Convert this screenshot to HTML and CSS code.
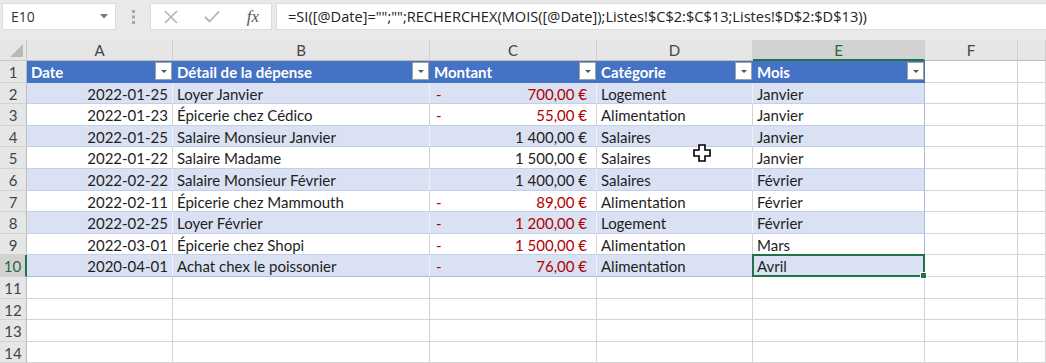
FILE: index.html
```html
<!DOCTYPE html>
<html lang="fr">
<head>
  <meta charset="UTF-8">
  <title>Dépenses</title>
  <link rel="stylesheet" href="styles.css">
</head>
<body>
<div class="toolbar">
  <div class="namebox">
    <span>E10</span>
    <svg width="8" height="5" viewBox="0 0 8 5"><path d="M0 0h8L4 4.5z" fill="#777"/></svg>
  </div>
  <div class="grip">
    <svg width="3" height="14" viewBox="0 0 3 14"><rect x="0" y="0" width="3" height="3" fill="#a6a6a6"/><rect x="0" y="5.5" width="3" height="3" fill="#a6a6a6"/><rect x="0" y="11" width="3" height="3" fill="#a6a6a6"/></svg>
  </div>
  <div class="fxbox">
    <svg width="14" height="14" viewBox="0 0 14 14"><path d="M1 1L13 13M13 1L1 13" stroke="#b3b3b3" stroke-width="1.6"/></svg>
    <svg width="16" height="13" viewBox="0 0 16 13"><path d="M1 7l4.5 4.5L15 1.5" fill="none" stroke="#b3b3b3" stroke-width="1.8"/></svg>
    <span class="fx">fx</span>
  </div>
  <div class="formula">=SI([@Date]="";"";RECHERCHEX(MOIS([@Date]);Listes!$C$2:$C$13;Listes!$D$2:$D$13))</div>
</div>

<div class="sheet">
  <div class="corner"></div>
  <div class="colh">A</div>
  <div class="colh">B</div>
  <div class="colh">C</div>
  <div class="colh">D</div>
  <div class="colh on">E</div>
  <div class="colh">F</div>
  <div class="colh"></div>

  <div class="rh">1</div>
  <div class="hd">Date<span class="dd"></span></div>
  <div class="hd">Détail de la dépense<span class="dd"></span></div>
  <div class="hd">Montant<span class="dd"></span></div>
  <div class="hd">Catégorie<span class="dd"></span></div>
  <div class="hd">Mois<span class="dd"></span></div>
  <div class="c"></div>
  <div class="c"></div>

  <div class="row band">
    <div class="rh">2</div>
    <div class="c t num">2022-01-25</div>
    <div class="c t">Loyer Janvier</div>
    <div class="c t money neg"><span>-</span><span>700,00 €</span></div>
    <div class="c t">Logement</div>
    <div class="c t last">Janvier</div>
    <div class="c"></div>
    <div class="c"></div>
  </div>
  <div class="row">
    <div class="rh">3</div>
    <div class="c t num">2022-01-23</div>
    <div class="c t">Épicerie chez Cédico</div>
    <div class="c t money neg"><span>-</span><span>55,00 €</span></div>
    <div class="c t">Alimentation</div>
    <div class="c t last">Janvier</div>
    <div class="c"></div>
    <div class="c"></div>
  </div>
  <div class="row band">
    <div class="rh">4</div>
    <div class="c t num">2022-01-25</div>
    <div class="c t">Salaire Monsieur Janvier</div>
    <div class="c t money"><span></span><span>1 400,00 €</span></div>
    <div class="c t">Salaires</div>
    <div class="c t last">Janvier</div>
    <div class="c"></div>
    <div class="c"></div>
  </div>
  <div class="row">
    <div class="rh">5</div>
    <div class="c t num">2022-01-22</div>
    <div class="c t">Salaire Madame</div>
    <div class="c t money"><span></span><span>1 500,00 €</span></div>
    <div class="c t">Salaires</div>
    <div class="c t last">Janvier</div>
    <div class="c"></div>
    <div class="c"></div>
  </div>
  <div class="row band">
    <div class="rh">6</div>
    <div class="c t num">2022-02-22</div>
    <div class="c t">Salaire Monsieur Février</div>
    <div class="c t money"><span></span><span>1 400,00 €</span></div>
    <div class="c t">Salaires</div>
    <div class="c t last">Février</div>
    <div class="c"></div>
    <div class="c"></div>
  </div>
  <div class="row">
    <div class="rh">7</div>
    <div class="c t num">2022-02-11</div>
    <div class="c t">Épicerie chez Mammouth</div>
    <div class="c t money neg"><span>-</span><span>89,00 €</span></div>
    <div class="c t">Alimentation</div>
    <div class="c t last">Février</div>
    <div class="c"></div>
    <div class="c"></div>
  </div>
  <div class="row band">
    <div class="rh">8</div>
    <div class="c t num">2022-02-25</div>
    <div class="c t">Loyer Février</div>
    <div class="c t money neg"><span>-</span><span>1 200,00 €</span></div>
    <div class="c t">Logement</div>
    <div class="c t last">Février</div>
    <div class="c"></div>
    <div class="c"></div>
  </div>
  <div class="row">
    <div class="rh">9</div>
    <div class="c t num">2022-03-01</div>
    <div class="c t">Épicerie chez Shopi</div>
    <div class="c t money neg"><span>-</span><span>1 500,00 €</span></div>
    <div class="c t">Alimentation</div>
    <div class="c t last">Mars</div>
    <div class="c"></div>
    <div class="c"></div>
  </div>
  <div class="row band end">
    <div class="rh on">10</div>
    <div class="c t num">2020-04-01</div>
    <div class="c t">Achat chex le poissonier</div>
    <div class="c t money neg"><span>-</span><span>76,00 €</span></div>
    <div class="c t">Alimentation</div>
    <div class="c t last sel">Avril</div>
    <div class="c"></div>
    <div class="c"></div>
  </div>

  <div class="rh">11</div>
  <div class="c"></div><div class="c"></div><div class="c"></div><div class="c"></div><div class="c"></div><div class="c"></div><div class="c"></div>
  <div class="rh">12</div>
  <div class="c"></div><div class="c"></div><div class="c"></div><div class="c"></div><div class="c"></div><div class="c"></div><div class="c"></div>
  <div class="rh">13</div>
  <div class="c"></div><div class="c"></div><div class="c"></div><div class="c"></div><div class="c"></div><div class="c"></div><div class="c"></div>
  <div class="rh">14</div>
  <div class="c"></div><div class="c"></div><div class="c"></div><div class="c"></div><div class="c"></div><div class="c"></div><div class="c"></div>
</div>

<svg class="cursor" width="18" height="18" viewBox="0 0 18 18">
  <path d="M6 1h6v5h5v6h-5v5H6v-5H1V6h5z" fill="#fff" stroke="#000" stroke-width="1.6"/>
</svg>
</body>
</html>
```

FILE: styles.css
```css
body {
  margin: 0;
  width: 1046px;
  height: 363px;
  overflow: hidden;
  background: #e6e6e6;
  font-family: Lato, "Noto Sans", sans-serif;
  color: #1e1e1e;
  position: relative;
}

/* formula bar */
.toolbar {
  height: 40px;
  display: flex;
  align-items: flex-start;
  padding: 3px 0 0 2px;
  box-sizing: border-box;
  background: #e9e9e9;
}
.namebox {
  width: 114px;
  height: 27px;
  background: #fff;
  border: 1px solid #dcdcdc;
  box-sizing: border-box;
  display: flex;
  align-items: center;
  justify-content: space-between;
  padding: 0 7px 0 8px;
  font-family: "Open Sans", sans-serif;
  font-size: 14px;
  color: #333;
}
.grip {
  width: 34px;
  height: 27px;
  display: flex;
  align-items: center;
  justify-content: center;
}
.fxbox {
  width: 122px;
  height: 27px;
  background: #fff;
  border: 1px solid #dcdcdc;
  box-sizing: border-box;
  display: flex;
  align-items: center;
  justify-content: space-between;
  padding: 0 12px 0 13px;
}
.fx {
  font-family: "Liberation Serif", serif;
  font-style: italic;
  font-size: 17px;
  color: #555;
}
.formula {
  flex: 1;
  margin-left: 4px;
  height: 27px;
  background: #fff;
  border: 1px solid #dcdcdc;
  border-right: none;
  box-sizing: border-box;
  padding-left: 11px;
  line-height: 25px;
  font-family: "Open Sans", sans-serif;
  font-size: 14.6px;
  color: #222;
  white-space: nowrap;
}

/* grid */
.sheet {
  display: grid;
  grid-template-columns: 27px 146px 257px 167px 156px 172px 93px 28px;
  grid-template-rows: 21px;
  grid-auto-rows: 21.6px;
  background: #fff;
  font-size: 15px;
}
.row {
  display: contents;
}
.corner, .colh, .rh {
  background: #e6e6e6;
  color: #444;
  box-sizing: border-box;
}
.corner {
  border-right: 1px solid #c8c8c8;
  border-bottom: 1px solid #c8c8c8;
  position: relative;
}
.corner::after {
  content: "";
  position: absolute;
  right: 3px;
  bottom: 3px;
  border-left: 13px solid transparent;
  border-bottom: 13px solid #b9b9b9;
}
.colh {
  text-align: center;
  line-height: 20px;
  border-right: 1px solid #cfcfcf;
  border-bottom: 1px solid #bdbdbd;
}
.colh.on {
  background: #d2d2d2;
  color: #1f6b43;
  border-bottom: 2px solid #217346;
}
.rh {
  text-align: center;
  line-height: 21px;
  padding-top: 1px;
  border-right: 1px solid #bdbdbd;
  border-bottom: 1px solid #d2d2d2;
}
.rh.on {
  background: #d2d2d2;
  color: #1f6b43;
  border-right: 2px solid #217346;
}
.c {
  box-sizing: border-box;
  border-right: 1px solid #d4d4d4;
  border-bottom: 1px solid #d4d4d4;
  padding: 1px 4px 0;
  line-height: 21px;
  white-space: nowrap;
  overflow: hidden;
}
.band .t {
  background: #d9e1f2;
  border-right-color: #eef2fa;
}
.t {
  border-bottom-color: #c3d0ea;
}
.t.last {
  border-right-color: #a9bde3;
}
.end .t {
  border-bottom-color: #a9bde3;
}
.num {
  text-align: right;
}
.money {
  display: flex;
  justify-content: space-between;
  padding: 1px 9px 0 6px;
}
.neg {
  color: #b00000;
}

/* table header row */
.hd {
  background: #4472c4;
  color: #fff;
  font-weight: bold;
  line-height: 21px;
  padding: 1px 4px 0;
  position: relative;
  box-sizing: border-box;
  border-bottom: 1px solid #4472c4;
}
.dd {
  position: absolute;
  right: 1px;
  top: 1px;
  width: 17px;
  height: 18px;
  background: #fff;
  border: 1px solid #a0a0a0;
  box-sizing: border-box;
}
.dd::after {
  content: "";
  position: absolute;
  left: 5px;
  top: 7px;
  border-left: 3px solid transparent;
  border-right: 3px solid transparent;
  border-top: 3px solid #555;
}

/* active cell */
.sel {
  position: relative;
  overflow: visible;
}
.sel::after {
  content: "";
  position: absolute;
  left: -1px;
  top: -1px;
  right: -1px;
  bottom: -1px;
  border: 2px solid #217346;
}
.sel::before {
  content: "";
  position: absolute;
  right: -3px;
  bottom: -3px;
  width: 5px;
  height: 5px;
  background: #217346;
  border: 1px solid #fff;
  z-index: 1;
}

.cursor {
  position: absolute;
  left: 693px;
  top: 144px;
}
```
